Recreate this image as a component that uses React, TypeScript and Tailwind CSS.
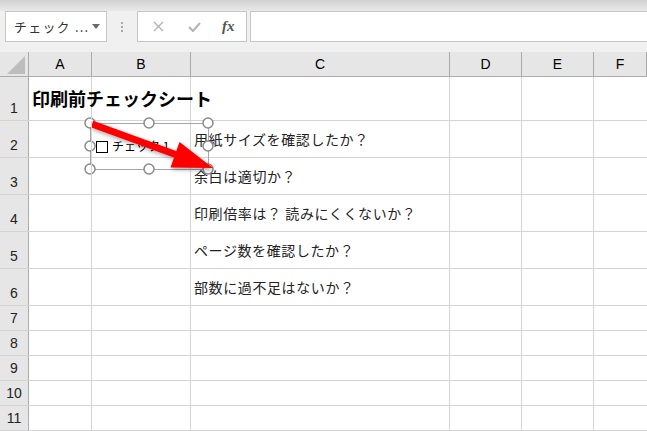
import React from 'react';

const font = { fontFamily: '"Noto Sans CJK JP", "Liberation Sans", sans-serif' };

const colW = ['w-[29px]', 'w-[63px]', 'w-[99px]', 'w-[259px]', 'w-[72px]', 'w-[72px]', 'flex-1'];
const letters = ['A', 'B', 'C', 'D', 'E', 'F'];

const rows: { h: string; c?: string; a?: string }[] = [
  { h: 'h-[44px]', a: '印刷前チェックシート' },
  { h: 'h-[37px]', c: '用紙サイズを確認したか？' },
  { h: 'h-[37px]', c: '余白は適切か？' },
  { h: 'h-[37px]', c: '印刷倍率は？ 読みにくくないか？' },
  { h: 'h-[37px]', c: 'ページ数を確認したか？' },
  { h: 'h-[37px]', c: '部数に過不足はないか？' },
  { h: 'h-[25px]' },
  { h: 'h-[25px]' },
  { h: 'h-[25px]' },
  { h: 'h-[25px]' },
  { h: 'h-[25px]' },
];

function TopBar() {
  return (
    <div className="h-[52px] bg-[#f0f0f0] flex flex-col">
      <div className="h-[11px] bg-gradient-to-b from-[#d2d2d2] to-[#e9e9e9]" />
      <div className="flex items-stretch h-[31px] pl-[5px]">
        <div className="w-[102px] bg-white border border-[#c6c6c6] flex items-center pl-[8px] pr-[6px]">
          <span className="text-[13px] text-[#333] tracking-[1.2px] flex-1 whitespace-nowrap" style={font}>チェック ...</span>
          <svg width="8" height="5" viewBox="0 0 8 5"><path d="M0 0h8L4 5z" fill="#6a6a6a" /></svg>
        </div>
        <div className="w-[30px] flex flex-col items-center justify-center gap-[2px]">
          <div className="w-[2px] h-[2px] bg-[#a8a8a8]" />
          <div className="w-[2px] h-[2px] bg-[#a8a8a8]" />
          <div className="w-[2px] h-[2px] bg-[#a8a8a8]" />
        </div>
        <div className="w-[110px] bg-white border border-[#c6c6c6] flex items-center">
          <svg className="ml-[15px]" width="11" height="11" viewBox="0 0 11 11">
            <path d="M1 1l9 9M10 1l-9 9" stroke="#b4b4b4" strokeWidth="1.4" />
          </svg>
          <svg className="ml-[24px]" width="13" height="10" viewBox="0 0 13 10">
            <path d="M1 5l4 4 7-8" stroke="#b4b4b4" strokeWidth="2" fill="none" />
          </svg>
          <span className="ml-[21px] text-[15px] italic font-bold text-[#555]" style={{ fontFamily: '"Liberation Serif", serif' }}>fx</span>
        </div>
        <div className="ml-[3px] flex-1 bg-white border border-[#c6c6c6] border-r-0" />
      </div>
    </div>
  );
}

function Overlay() {
  const handles: [number, number][] = [
    [90, 123], [149, 123], [208, 123],
    [90, 146], [208, 146],
    [90, 169], [149, 169], [208, 169],
  ];
  return (
    <>
      <div className="absolute left-[96px] top-[141px] w-[12px] h-[12px] border border-black bg-white" />
      <span className="absolute left-[112px] top-[137px] text-[12px] leading-[18px] text-black whitespace-nowrap" style={font}>チェック 1</span>
      <svg className="absolute left-0 top-0 pointer-events-none" width="647" height="431">
        <defs>
          <filter id="sh" x="-20%" y="-20%" width="140%" height="140%">
            <feDropShadow dx="1" dy="2" stdDeviation="2" floodColor="#000" floodOpacity="0.35" />
          </filter>
        </defs>
        <rect x="90.5" y="123.5" width="118" height="46" fill="none" stroke="#a6a6a6" />
        {handles.map(([x, y], i) => (
          <circle key={i} cx={x} cy={y} r="5" fill="#fff" stroke="#8a8a8a" strokeWidth="1.5" />
        ))}
        <g filter="url(#sh)">
          <line x1="92" y1="124" x2="177" y2="155" stroke="#ff0000" strokeWidth="7" />
          <polygon points="213,168 179.5,142 170.5,167.5" fill="#ff0000" />
        </g>
      </svg>
    </>
  );
}

export default function App() {
  return (
    <div className="relative w-[647px] h-[431px] overflow-hidden bg-white" style={font}>
      <TopBar />
      <div className="flex h-[25px] bg-[#e6e6e6] border-b border-[#ababab]">
        <div className={`${colW[0]} shrink-0 border-r border-[#ababab] flex items-end justify-end pr-[3px] pb-[2px]`}>
          <svg width="18" height="18" viewBox="0 0 18 18"><path d="M18 0V18H0z" fill="#bdbdbd" /></svg>
        </div>
        {letters.map((l, i) => (
          <div
            key={l}
            className={`${colW[i + 1]} shrink-0 border-r border-[#ababab] flex items-center justify-center text-[14px] text-black`}
            style={{ fontFamily: '"Liberation Sans", sans-serif' }}
          >
            {l}
          </div>
        ))}
      </div>
      {rows.map((r, ri) => (
        <div key={ri} className={`flex ${r.h} border-b border-[#d4d4d4]`}>
          <div
            className={`${colW[0]} shrink-0 bg-[#e6e6e6] border-r border-[#ababab] flex items-end justify-center pb-[4px] text-[14px] leading-[16px] text-[#222]`}
            style={{ fontFamily: '"Liberation Sans", sans-serif' }}
          >
            {ri + 1}
          </div>
          <div className={`${colW[1]} shrink-0 border-r border-[#d4d4d4] flex items-end pl-[3px] pb-[10px] relative z-10`}>
            {r.a && <span className="text-[18px] leading-[24px] font-bold text-black whitespace-nowrap">{r.a}</span>}
          </div>
          <div className={`${colW[2]} shrink-0 border-r border-[#d4d4d4]`} />
          <div className={`${colW[3]} shrink-0 border-r border-[#d4d4d4] flex items-end pl-[3px] pb-[8px]`}>
            {r.c && <span className="text-[14px] leading-[20px] text-[#222] whitespace-nowrap tracking-[0.6px]">{r.c}</span>}
          </div>
          <div className={`${colW[4]} shrink-0 border-r border-[#d4d4d4]`} />
          <div className={`${colW[5]} shrink-0 border-r border-[#d4d4d4]`} />
          <div className={`${colW[6]}`} />
        </div>
      ))}
      <Overlay />
    </div>
  );
}
